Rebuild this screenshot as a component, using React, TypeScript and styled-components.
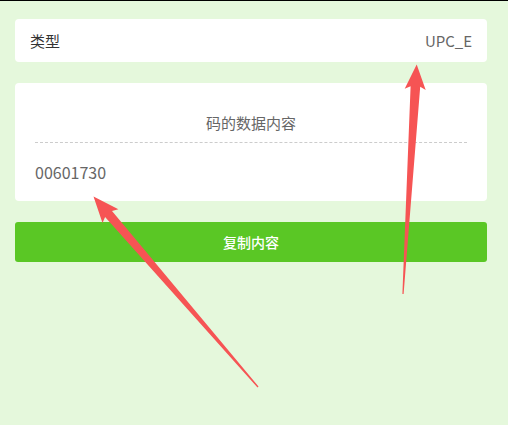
import React from 'react';
import styled, { createGlobalStyle } from 'styled-components';

const GlobalStyle = createGlobalStyle`
  html, body {
    margin: 0;
    padding: 0;
    background-color: #e5f8dc;
  }
  body {
    font-family: "Noto Sans CJK SC", "Noto Sans", sans-serif;
    border-top: 1px solid #000;
  }
`;

const Page = styled.div`
  position: relative;
  min-height: 424px;
  padding: 18px 21px 0 15px;
  box-sizing: border-box;
  display: flex;
  flex-direction: column;
  gap: 21px;
`;

const Card = styled.div`
  background-color: #fff;
  border-radius: 4px;
`;

const InfoRow = styled(Card)`
  height: 43px;
  padding: 0 15px;
  display: flex;
  align-items: center;
  justify-content: space-between;
  font-size: 15px;
`;

const Label = styled.span`
  color: #333;
`;

const Value = styled.span`
  color: #666;
`;

const DataCard = styled(Card)`
  padding: 0 20px;
`;

const DataTitle = styled.div`
  padding: 30px 0 9px;
  line-height: 20px;
  font-size: 15px;
  color: #666;
  text-align: center;
  border-bottom: 1px dashed #ccc;
`;

const DataValue = styled.div`
  padding: 19px 0;
  line-height: 20px;
  font-size: 16px;
  color: #666;
`;

const CopyButton = styled.button`
  height: 40px;
  border: none;
  border-radius: 3px;
  background-color: #5ac725;
  color: #fff;
  font-family: inherit;
  font-size: 14px;
  font-weight: 500;
  cursor: pointer;
`;

const Overlay = styled.svg`
  position: absolute;
  left: 0;
  top: 0;
  width: 508px;
  height: 425px;
  pointer-events: none;
`;

type Pt = [number, number];

// tapered annotation arrow: thin tail, wide shaft near the head, triangular head
const arrowPoints = (tail: Pt, tip: Pt, headLen: number, headHalf: number, shaftHalf: number) => {
  const dx = tip[0] - tail[0];
  const dy = tip[1] - tail[1];
  const len = Math.hypot(dx, dy);
  const ux = dx / len;
  const uy = dy / len;
  const nx = -uy;
  const ny = ux;
  const bx = tip[0] - ux * headLen;
  const by = tip[1] - uy * headLen;
  const ix = bx + ux * 3;
  const iy = by + uy * 3;
  const pts: Pt[] = [
    tip,
    [bx + nx * headHalf, by + ny * headHalf],
    [ix + nx * shaftHalf, iy + ny * shaftHalf],
    [tail[0] + nx * 0.6, tail[1] + ny * 0.6],
    [tail[0] - nx * 0.6, tail[1] - ny * 0.6],
    [ix - nx * shaftHalf, iy - ny * shaftHalf],
    [bx - nx * headHalf, by - ny * headHalf],
  ];
  return pts.map((p) => `${p[0].toFixed(1)},${p[1].toFixed(1)}`).join(' ');
};

export default function App() {
  return (
    <>
      <GlobalStyle />
      <Page>
        <InfoRow>
          <Label>类型</Label>
          <Value>UPC_E</Value>
        </InfoRow>
        <DataCard>
          <DataTitle>码的数据内容</DataTitle>
          <DataValue>00601730</DataValue>
        </DataCard>
        <CopyButton>复制内容</CopyButton>
        <Overlay viewBox="0 0 508 425">
          <polygon fill="#f65454" points={arrowPoints([258, 386], [93.5, 195.5], 26, 10.5, 4.6)} />
          <polygon fill="#f65454" points={arrowPoints([403, 293], [416.7, 63.5], 25, 10.5, 4.8)} />
        </Overlay>
      </Page>
    </>
  );
}
